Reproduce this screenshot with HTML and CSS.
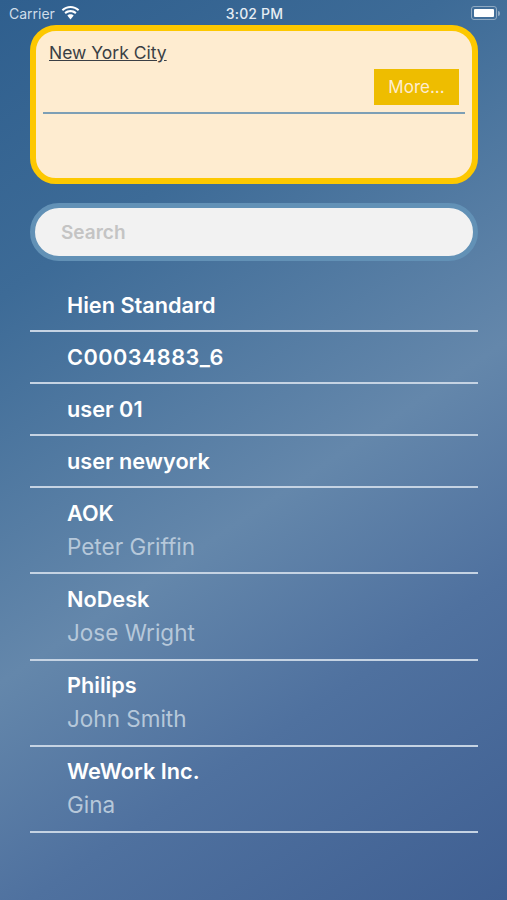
FILE: index.html
```html
<!DOCTYPE html>
<html lang="en">
<head>
  <meta charset="UTF-8">
  <meta name="viewport" content="width=device-width, initial-scale=1">
  <title>Customers</title>
  <link rel="stylesheet" href="styles.css">
</head>
<body>

<div class="status-bar">
  <div class="status-left">
    <span>Carrier</span>
    <svg class="wifi" width="19" height="14" viewBox="0 0 20 15">
      <path d="M10 2.200c3 0 5.800 1.100 8 3.100l1.400-1.600C16.800 1.300 13.500 0 10 0S3.200 1.300.6 3.700L2 5.300c2.200-2 5-3.100 8-3.100z" fill="#fff"/>
      <path d="M10 6.600c1.900 0 3.600.7 5 1.900l1.500-1.600C14.700 5.300 12.400 4.400 10 4.400s-4.700.9-6.500 2.500L5 8.500c1.400-1.200 3.100-1.900 5-1.900z" fill="#fff"/>
      <path d="M10 8.800c-1.300 0-2.500.5-3.400 1.300L10 14.500l3.400-4.400c-.9-.8-2.100-1.300-3.400-1.300z" fill="#fff"/>
    </svg>
  </div>
  <div class="status-time">3:02 PM</div>
  <div class="status-right">
    <div class="battery"><div class="battery-level"></div></div>
    <div class="battery-cap"></div>
  </div>
</div>

<div class="content">
  <div class="location-card">
    <div class="location-top">
      <a class="location-name">New York City</a>
      <div class="more-row"><button class="more-button">More...</button></div>
    </div>
    <div class="location-line"></div>
  </div>

  <div class="search-box">
    <span class="search-placeholder">Search</span>
  </div>

  <div class="list">
    <div class="row"><div class="row-title">Hien Standard</div></div>
    <div class="row"><div class="row-title row-code">C00034883_6</div></div>
    <div class="row"><div class="row-title">user 01</div></div>
    <div class="row"><div class="row-title">user newyork</div></div>
    <div class="row row-double"><div class="row-title">AOK</div><div class="row-sub">Peter Griffin</div></div>
    <div class="row row-double"><div class="row-title">NoDesk</div><div class="row-sub">Jose Wright</div></div>
    <div class="row row-double"><div class="row-title">Philips</div><div class="row-sub">John Smith</div></div>
    <div class="row row-double"><div class="row-title">WeWork Inc.</div><div class="row-sub">Gina</div></div>
  </div>
</div>

</body>
</html>
```

FILE: styles.css
```css
html, body {
  height: 100%;
}

body {
  margin: 0;
  height: 900px;
  overflow: hidden;
  font-family: Inter, "Liberation Sans", sans-serif;
  color: #fff;
  background-color: #4d7099;
  background-image: linear-gradient(146deg, #2f5f8e 0%, #3d6b97 24%, #6487ab 55%, #4f719f 74%, #3f5f92 100%);
}

.status-bar {
  display: grid;
  grid-template-columns: 1fr auto 1fr;
  align-items: center;
  height: 25px;
  padding: 1px 7px 0 9px;
  box-sizing: border-box;
  font-size: 14px;
  color: #e6edf3;
}

.status-left {
  display: flex;
  align-items: center;
  gap: 6px;
  color: #cfdde9;
}

.wifi {
  margin-top: -1px;
}

.status-time {
  font-weight: 500;
  letter-spacing: 0.2px;
}

.status-right {
  display: flex;
  justify-content: flex-end;
  align-items: center;
  gap: 1px;
}

.battery {
  width: 20px;
  height: 8px;
  padding: 2px;
  border: 1px solid #8fa9c2;
  border-radius: 3px;
}

.battery-level {
  height: 100%;
  background-color: #fff;
  border-radius: 1px;
}

.battery-cap {
  width: 2px;
  height: 5px;
  background-color: #8fa9c2;
  border-radius: 0 2px 2px 0;
}

.content {
  padding: 0 29px 0 30px;
}

.location-card {
  height: 159px;
  box-sizing: border-box;
  border: 6px solid #fdc800;
  border-radius: 26px;
  background-color: #feecd0;
  padding: 0 7px;
}

.location-top {
  padding: 11px 6px 7px;
}

.location-name {
  display: block;
  font-size: 17.5px;
  line-height: 22px;
  color: #3a3f45;
  text-decoration: underline;
}

.more-row {
  display: flex;
  justify-content: flex-end;
  margin-top: 5px;
}

.more-button {
  width: 85px;
  height: 36px;
  border: none;
  padding: 0;
  background-color: #eebd00;
  color: #feecd0;
  font-family: inherit;
  font-size: 17px;
}

.location-line {
  height: 2px;
  background-color: #7d9fb5;
}

.search-box {
  display: flex;
  align-items: center;
  height: 58px;
  box-sizing: border-box;
  margin-top: 19px;
  padding-left: 26px;
  border: 5px solid #6291b6;
  border-radius: 29px;
  background-color: #f2f2f2;
}

.search-placeholder {
  font-size: 19px;
  font-weight: 600;
  color: #c4c4c4;
}

.list {
  margin-top: 19px;
}

.row {
  display: flex;
  flex-direction: column;
  justify-content: center;
  height: 52px;
  box-sizing: border-box;
  padding-left: 37px;
  border-bottom: 2px solid #c5d3e3;
}

.row-double {
  height: 86.25px;
}

.row-title {
  font-size: 21.7px;
  line-height: 26px;
  font-weight: 600;
}

.row-code {
  letter-spacing: 0.45px;
}

.row-sub {
  font-size: 22.5px;
  line-height: 28px;
  margin-top: 7px;
  color: #b6c8da;
}
```
